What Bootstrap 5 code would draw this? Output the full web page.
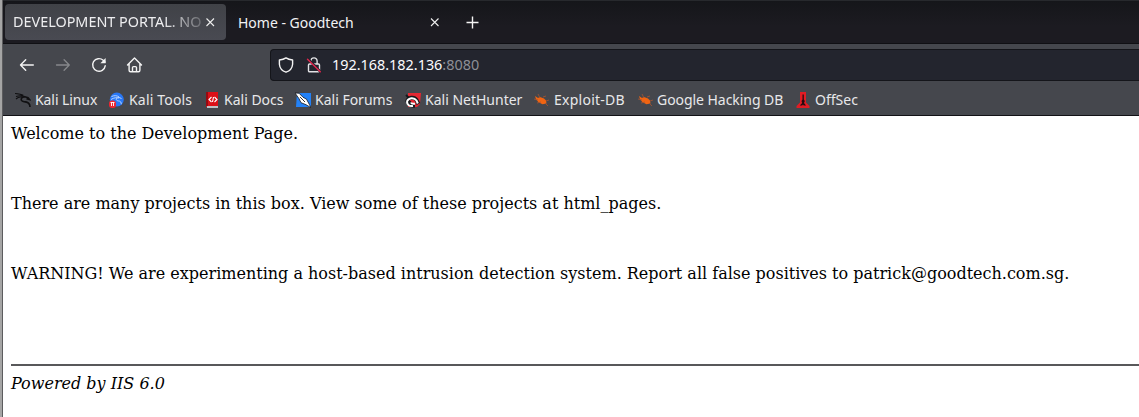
<!DOCTYPE html>
<html lang="en">
<head>
<meta charset="utf-8">
<title>DEVELOPMENT PORTAL</title>
<link href="https://cdn.jsdelivr.net/npm/bootstrap@5.3.0/dist/css/bootstrap.min.css" rel="stylesheet">
<style>
body{height:417px;overflow:hidden;background:#fff;font-family:"Noto Sans",sans-serif;font-size:14px;line-height:20px}
.browser{height:417px;border-left:2px solid #a5a5a5}
.frame{border-left:1px solid #5c5c5e;min-width:0}
.tabstrip{height:44px;background:linear-gradient(#15161a,#1c1b21 60%);border-top:1px solid #27292d;border-bottom:1px solid #101014;color:#eeeef0;padding:3px 0 3px 2px}
.tab-active{width:221px;height:36px;border-radius:4px;background:linear-gradient(#404247,#494a52);padding-left:8px}
.tab-title{width:190px;overflow:hidden;white-space:nowrap;font-size:14.4px;-webkit-mask-image:linear-gradient(90deg,#000 150px,rgba(0,0,0,.2) 190px);mask-image:linear-gradient(90deg,#000 150px,rgba(0,0,0,.2) 190px)}
.tab-idle{width:208px;height:36px;padding:2px 0 0 12px;color:#f2f2f4}
.tab-idle svg{margin:-2px -9px 0 0}
.new-tab{margin-left:30px}
.tools{height:42px;background:#45474d;padding-left:16px}
.tools svg{display:block;flex:none}
.address{height:32px;background:#23252e;border:1px solid #14151a;border-right:0;border-radius:4px 0 0 4px;margin-left:127px;padding-left:7px;color:#fbfbfe;font-size:14.4px}
.address .lock{margin:0 10px 0 12px}
.port{color:#8e8f96}
.marks{height:30px;background:#45474d;border-bottom:1px solid #121216;color:#e8e8ea;padding:0 0 2px 12px;white-space:nowrap}
.marks svg{flex:none;margin-right:4px}
.mk1{width:93px;letter-spacing:-.08px}.mk2{width:96px;letter-spacing:.18px}.mk3{width:91px}.mk4{width:110px}.mk5{width:128px}.mk6{width:104px;letter-spacing:.25px}.mk7{width:158px;letter-spacing:-.05px}
.mk2 svg,.mk6 svg{margin-right:5px}
.webpage{font-family:"DejaVu Serif",serif;font-size:16px;line-height:19px;color:#000;padding:8px 0 0 8px;white-space:nowrap}
.webpage p{margin:0 0 51px}
.rule{height:2px;background:#58585a;margin-top:81px;margin-bottom:8px}
</style>
</head>
<body>
<div class="browser d-flex">
<div class="frame flex-grow-1">
  <header>
    <div class="tabstrip d-flex">
      <div class="tab-active d-flex align-items-center">
        <span class="tab-title">DEVELOPMENT PORTAL. NO</span>
        <svg width="16" height="16" viewBox="0 0 16 16" stroke="#eee" stroke-width="1.1"><path d="M3.500 4.500l7.500 7.500m0-7.500l-7.500 7.500"/></svg>
      </div>
      <div class="tab-idle d-flex align-items-center justify-content-between">
        <span>Home - Goodtech</span>
        <svg width="16" height="16" viewBox="0 0 16 16" stroke="#eee" stroke-width="1.1"><path d="M4 4.500l7.500 7.500m0-7.500l-7.500 7.500"/></svg>
      </div>
      <div class="new-tab d-flex align-items-center">
        <svg width="16" height="16" viewBox="0 0 16 16" stroke="#f4f4f4" stroke-width="1.4"><path d="M2.500 8.500h12m-6-6v12"/></svg>
      </div>
    </div>
    <div class="tools d-flex align-items-center">
      <svg width="16" height="16" viewBox="0 0 16 16" fill="none" stroke="#f4f4f4" stroke-width="1.4" stroke-linecap="round" stroke-linejoin="round"><path d="M14.300 8H1.500M6.700 2.800L1.500 8l5.200 5.200"/></svg>
      <svg class="ms-3" width="20" height="16" viewBox="-4 0 20 16" fill="none" stroke="#86888c" stroke-width="1.3" stroke-linecap="round" stroke-linejoin="round"><path d="M1.500 8h12.800M9.100 2.800L14.300 8l-5.200 5.200"/></svg>
      <svg class="ms-3" width="20" height="16" viewBox="-4 0 20 16" fill="none" stroke="#f4f4f4" stroke-width="1.4" stroke-linecap="round"><path d="M14.200 8.800A6.300 6.300 0 1 1 12.200 3.300l1.800 1.800"/><path d="M14.600 1v5.200H9.400z" fill="#f4f4f4" stroke="none"/></svg>
      <svg class="ms-3" width="20" height="16" viewBox="-3.5 0 20 16" fill="none" stroke="#f4f4f4" stroke-width="1.4" stroke-linecap="round" stroke-linejoin="round"><path d="M1 8l7-7 7 7M2.600 6.800v6.500a1.500 1.500 0 0 0 1.500 1.500h7.800a1.500 1.500 0 0 0 1.500-1.500V6.800M6 14.600v-4a1 1 0 0 1 1-1h2a1 1 0 0 1 1 1v4"/></svg>
      <div class="address flex-grow-1 d-flex align-items-center">
        <svg width="16" height="16" viewBox="0 0 16 16" fill="none" stroke="#f4f4f4" stroke-width="1.4" stroke-linejoin="round"><path d="M8 .9C6.200 2.200 4 2.800 1.400 3v4.200C1.700 10.700 4.500 14 8 15.200 11.500 14 14.300 10.700 14.600 7.200V3C12 2.800 9.800 2.200 8 .9z"/></svg>
        <svg class="lock" width="16" height="16" viewBox="0 0 16 16" fill="none" stroke="#e2e2e5" stroke-width="1.4" stroke-linecap="round"><path d="M4.900 7V4a3.100 3.100 0 0 1 6.200 0v3M3.500 7h9a1 1 0 0 1 1 1v5.800a1 1 0 0 1-1 1h-9a1 1 0 0 1-1-1V8a1 1 0 0 1 1-1z"/><path d="M2.300 2.200l11.800 12.200" stroke="#23252e" stroke-width="2.600"/><path d="M1.500 2.200l12.800 12.600" stroke="#e2264d" stroke-width="1.400"/></svg>
        <span>192.168.182.136<span class="port">:8080</span></span>
      </div>
    </div>
    <nav class="marks d-flex align-items-center">
      <div class="d-flex align-items-center mk1"><svg width="16" height="16" viewBox="0 0 16 16" fill="none" stroke="#101012"><path d="M0 1.500c3 .2 6 .5 8.500 2M1 4.500c3-1 6-1.200 9 .5M1 7c2-2 4.500-2.300 7-1.700" stroke-width="1.100"/><path d="M9 4.500l4 1.200 1.500 1.800-3-.8M9.500 5c-4 0-4.500 4.300-.5 4.600 4 .2 6 1.400 6 5.400" stroke-width="1.600"/></svg>Kali Linux</div>
      <div class="d-flex align-items-center mk2"><svg width="16" height="16" viewBox="0 0 16 16" fill="none"><circle cx="8.800" cy="7.600" r="7" fill="#2877f5"/><path d="M3.500 4.500c3-1.300 5.500-1 7.500.5M3 7.500c3-2 5.500-2 8-1.500M10 5l3.500 1.500M9.500 6c-2 .5-1.500 2.700.8 2.900s3 1.300 3 3.300" stroke="#c6dcff" stroke-width=".9"/><rect x="1" y="8.500" width="7" height="7.500" rx="3" fill="#ec2632"/><path d="M2.500 10.500h4M3.500 10.500V14m2-3.500V14" stroke="#fff" stroke-width=".9"/></svg>Kali Tools</div>
      <div class="d-flex align-items-center mk3"><svg width="16" height="16" viewBox="0 0 16 16" fill="none"><path d="M2 0h12v15H2z" fill="#dc1018"/><path d="M2 0h2v14H2z" fill="#950b12"/><path d="M3 14h11v2H3z" fill="#bec0c4"/><path d="M7.500 5L5 7.500 7.500 10M10.500 5L13 7.500 10.500 10M9.500 5l-1 5" stroke="#fff" stroke-width="1.100"/></svg>Kali Docs</div>
      <div class="d-flex align-items-center mk4"><svg width="16" height="16" viewBox="0 0 16 16"><path d="M2 1h14v14H1z" fill="#2381f6"/><path d="M0 1l4 .2 4 4 3.500 2 3 5.500 1.500 3-5-3-5-2-2-4z" fill="#fff" stroke="#15171c" stroke-width=".8"/><path d="M5 5l5 5" stroke="#333"/></svg>Kali Forums</div>
      <div class="d-flex align-items-center mk5"><svg width="16" height="16" viewBox="0 0 16 16" fill="none"><path d="M3 1h13l-1 11-3 3H3z" fill="#e52732"/><path d="M1 3l4 4" stroke="#17181c" stroke-width="2"/><path d="M2 10C3 5 9 4.500 11.500 8l2 4M4 9c0 3 2 4.500 6 5" stroke="#17181c" stroke-width="4"/><path d="M2 9.500C3.500 5.500 9 5 11.500 8.500l1.300 3M2 9.500c0 3.500 2.500 5 6 4.500M6 10.500c.5 1.500 2 1.500 4 1.200" stroke="#fff" stroke-width="2"/></svg>Kali NetHunter</div>
      <div class="d-flex align-items-center mk6"><svg width="16" height="16" viewBox="0 0 16 16"><path d="M2 4l3 2 2-1 4 1.500 2 2 .5 3-4 .8-4-2-2.500-3zM11 8l4-1" fill="#f06412"/><path d="M5 2l2 4M1 7l4 1m-1 3l4-1m2-5l3-1m0 5l3-1m-4 3l3 3" stroke="#a75431" stroke-width=".8"/></svg>Exploit-DB</div>
      <div class="d-flex align-items-center mk7"><svg width="16" height="16" viewBox="0 0 16 16"><path d="M2 4l3 2 2-1 4 1.500 2 2 .5 3-4 .8-4-2-2.500-3zM11 8l4-1" fill="#f06412"/><path d="M5 2l2 4M1 7l4 1m-1 3l4-1m2-5l3-1m0 5l3-1m-4 3l3 3" stroke="#a75431" stroke-width=".8"/></svg>Google Hacking DB</div>
      <div class="d-flex align-items-center"><svg width="16" height="16" viewBox="0 0 16 16"><path d="M5 0h6v10.500l3.500 3.500v2h-13v-2L5 10.500z" fill="#e01c24"/><path d="M7.500 2.500h1.300v5l1 1.500-.8 2 2 2.500H8.700L8 12.500l-.8 1H4.800l2.400-2.500L6.500 9l1-1.500z" fill="#260b10"/></svg>OffSec</div>
    </nav>
  </header>
  <main class="webpage">
    <p>Welcome to the Development Page.</p>
    <p>There are many projects in this box. View some of these projects at html_pages.</p>
    <div>WARNING! We are experimenting a host-based intrusion detection system. Report all false positives to patrick@goodtech.com.sg.</div>
    <div class="rule"></div>
    <em>Powered by IIS 6.0</em>
  </main>
</div>
</div>
<script src="https://cdn.jsdelivr.net/npm/bootstrap@5.3.0/dist/js/bootstrap.bundle.min.js"></script>
</body>
</html>
